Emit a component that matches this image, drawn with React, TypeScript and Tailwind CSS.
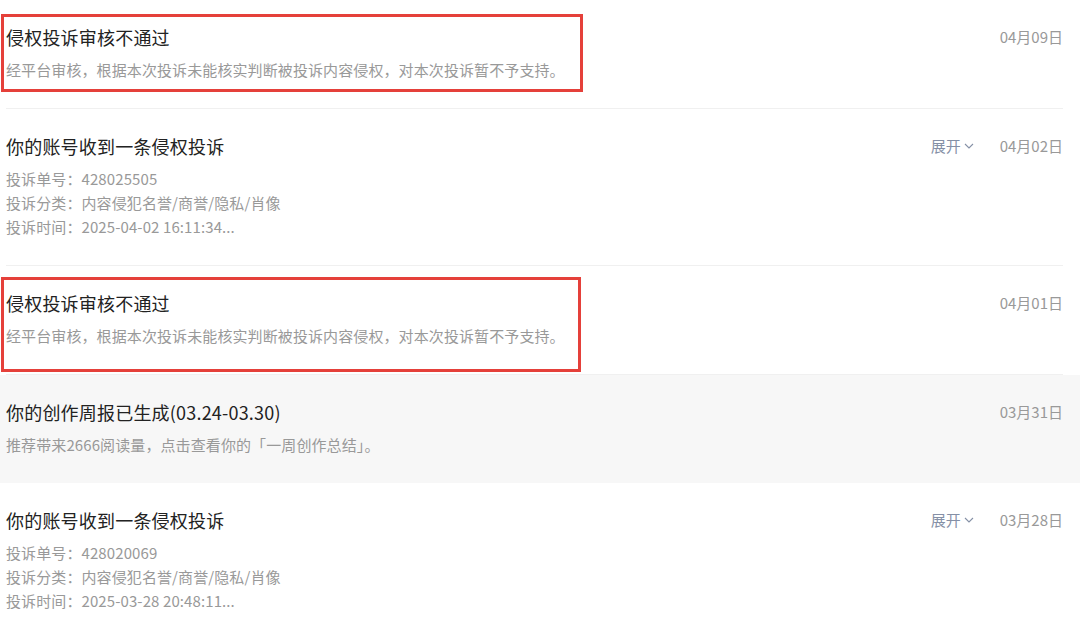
import React from 'react'

type Item = {
  title: string
  lines: string[]
  date: string
  expand?: boolean
  grey?: boolean
  mark?: string
}

const ITEMS: Item[] = [
  {
    title: '侵权投诉审核不通过',
    lines: ['经平台审核，根据本次投诉未能核实判断被投诉内容侵权，对本次投诉暂不予支持。'],
    date: '04月09日',
    mark: 'top-[14px] left-[1px] w-[582px] h-[78px]',
  },
  {
    title: '你的账号收到一条侵权投诉',
    lines: ['投诉单号：428025505', '投诉分类：内容侵犯名誉/商誉/隐私/肖像', '投诉时间：2025-04-02 16:11:34...'],
    date: '04月02日',
    expand: true,
  },
  {
    title: '侵权投诉审核不通过',
    lines: ['经平台审核，根据本次投诉未能核实判断被投诉内容侵权，对本次投诉暂不予支持。'],
    date: '04月01日',
    mark: 'top-[11px] left-[1px] w-[580px] h-[95px]',
  },
  {
    title: '你的创作周报已生成(03.24-03.30)',
    lines: ['推荐带来2666阅读量，点击查看你的「一周创作总结」。'],
    date: '03月31日',
    grey: true,
  },
  {
    title: '你的账号收到一条侵权投诉',
    lines: ['投诉单号：428020069', '投诉分类：内容侵犯名誉/商誉/隐私/肖像', '投诉时间：2025-03-28 20:48:11...'],
    date: '03月28日',
    expand: true,
  },
]

function Chevron() {
  return (
    <svg width="10" height="6" viewBox="0 0 10 6" fill="none" className="ml-[3px]">
      <path d="M1 1l4 4 4-4" stroke="#8590a6" strokeWidth="1.1" />
    </svg>
  )
}

export default function App() {
  return (
    <div
      className="w-[1080px] h-[625px] overflow-hidden bg-white"
      style={{ fontFamily: '"Noto Sans CJK SC", "Noto Sans", sans-serif' }}
    >
      {ITEMS.map((item, i) => (
        <div key={i} className={`relative ${item.grey ? 'bg-[#f7f7f7]' : ''}`}>
          <div
            className={`ml-[6px] mr-[17px] pt-6 pb-[26px] flex justify-between ${
              item.grey ? '' : 'border-b border-[#f0f0f0]'
            }`}
          >
            {/* Left: title and details */}
            <div>
              <div className="text-[18px] leading-[26px] text-[#222] tracking-[0.2px]">{item.title}</div>
              <div className="mt-2">
                {item.lines.map((line) => (
                  <div key={line} className="text-[15px] leading-6 text-[#999] tracking-[0.1px]">
                    {line}
                  </div>
                ))}
              </div>
            </div>

            {/* Right: expand and date */}
            <div className="flex items-center gap-[26px] h-[26px] text-[15px] text-[#999]">
              {item.expand && (
                <span className="flex items-center text-[#8590a6]">
                  展开
                  <Chevron />
                </span>
              )}
              <span>{item.date}</span>
            </div>
          </div>

          {/* Red annotation box */}
          {item.mark && (
            <div className={`absolute ${item.mark} border-[3px] border-[#e5403a] pointer-events-none`} />
          )}
        </div>
      ))}
    </div>
  )
}
